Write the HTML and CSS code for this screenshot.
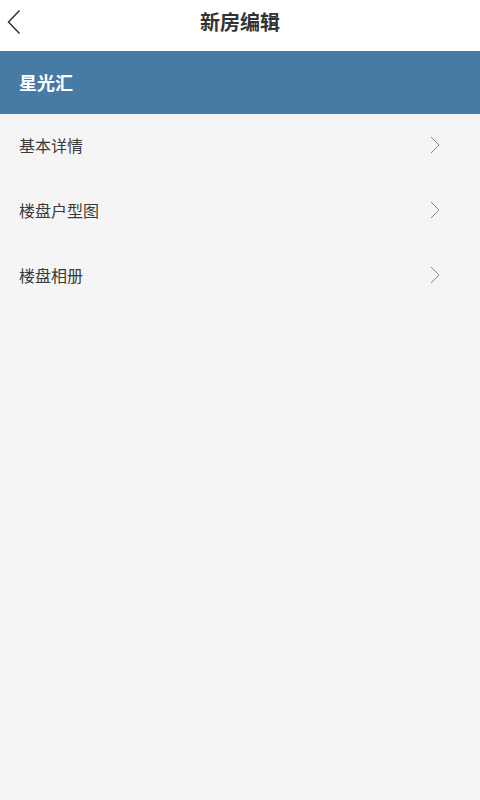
FILE: index.html
```html
<!DOCTYPE html>
<html lang="zh">

<head>
    <meta charset="UTF-8">
    <meta name="viewport" content="width=device-width, initial-scale=1.0">
    <title>新房编辑</title>
    <link rel="stylesheet" href="styles.css">
</head>

<body>
    <div id="header">
        <a class="back" href="#">
            <svg width="14" height="26" viewBox="0 0 14 26">
                <path d="M12.5 1.5 L1.5 13 L12.5 24.5" fill="none" stroke="#333" stroke-width="1.5" />
            </svg>
        </a>
        <h1>新房编辑</h1>
    </div>
    <div id="name">星光汇</div>
    <ul class="menu">
        <li>
            <span>基本详情</span>
            <svg class="arrow" width="10" height="18" viewBox="0 0 10 18">
                <path d="M1 1 L9 9 L1 17" fill="none" stroke="#888" stroke-width="1" />
            </svg>
        </li>
        <li>
            <span>楼盘户型图</span>
            <svg class="arrow" width="10" height="18" viewBox="0 0 10 18">
                <path d="M1 1 L9 9 L1 17" fill="none" stroke="#888" stroke-width="1" />
            </svg>
        </li>
        <li>
            <span>楼盘相册</span>
            <svg class="arrow" width="10" height="18" viewBox="0 0 10 18">
                <path d="M1 1 L9 9 L1 17" fill="none" stroke="#888" stroke-width="1" />
            </svg>
        </li>
    </ul>
</body>
</html>
```

FILE: styles.css
```css
* {
    margin: 0;
    padding: 0;
}

html,
body {
    height: 100%;
}

body {
    background: #f5f5f5;
    font-family: "Noto Sans CJK SC", "Noto Sans", sans-serif;
    color: #333;
}

#header {
    height: 51px;
    padding-bottom: 8px;
    box-sizing: border-box;
    background: #fff;
    display: flex;
    align-items: center;
    justify-content: center;
    position: relative;
}

#header h1 {
    font-size: 20px;
    font-weight: bold;
    color: #333;
}

.back {
    position: absolute;
    left: 7px;
    top: 9px;
    display: block;
    height: 26px;
}

#name {
    height: 63px;
    line-height: 63px;
    background: #477aa4;
    color: #fff;
    font-size: 18px;
    font-weight: bold;
    padding-left: 19px;
}

.menu li {
    list-style: none;
    height: 65px;
    box-sizing: border-box;
    display: flex;
    align-items: center;
    justify-content: space-between;
    padding: 0 40px 3px 19px;
    font-size: 16px;
    color: #3a3a3a;
}

.arrow {
    display: block;
}
```
